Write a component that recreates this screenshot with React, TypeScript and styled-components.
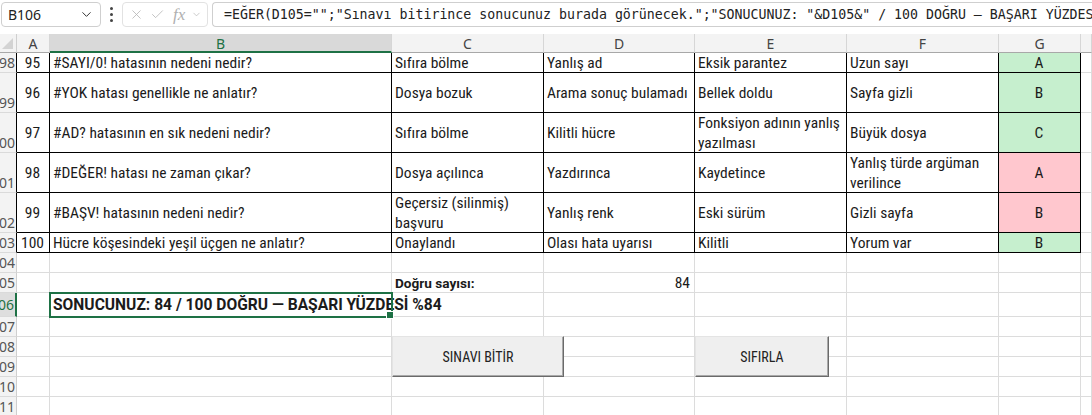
import React from "react";
import styled, { createGlobalStyle, css } from "styled-components";
import { ChevronDown, X, Check } from "lucide-react";

const GREEN = "#1e7145";
const GRID = "#dcdcdc";
const CELL_FONT = `"Liberation Sans Narrow", "Roboto Condensed", Roboto, "Noto Sans", sans-serif`;

const Global = createGlobalStyle`
  html, body { margin: 0; padding: 0; background: #fff; overflow: hidden; }
  body { font-family: ${CELL_FONT}; color: #1b1b1b; }
  * { box-sizing: border-box; }
`;

const Page = styled.div`
  width: 1092px;
  height: 415px;
  overflow: hidden;
  background: #fff;
`;

/* ---------- formula bar ---------- */
const FormulaBar = styled.div`
  height: 34px;
  display: flex;
  align-items: flex-start;
  padding: 2px 0 0 1px;
`;

const NameBox = styled.div`
  width: 100px;
  height: 25px;
  border: 1px solid #cfcfcf;
  border-radius: 4px;
  display: flex;
  align-items: center;
  justify-content: space-between;
  padding: 0 6px 0 6px;
  font-family: "Noto Sans", "Open Sans", sans-serif;
  font-size: 14px;
  color: #222;
`;

const Dots = styled.div`
  width: 21px;
  height: 25px;
  display: flex;
  flex-direction: column;
  align-items: center;
  justify-content: center;
  gap: 3px;
  span {
    width: 3px;
    height: 3px;
    border-radius: 50%;
    background: #444;
  }
`;

const EditBox = styled.div`
  width: 86px;
  height: 25px;
  border: 1px solid #e2e2e2;
  border-radius: 4px;
  display: flex;
  align-items: center;
  padding: 0 4px 0 6px;
  gap: 6px;
  color: #b5b5b5;
`;

const Fx = styled.span`
  font-family: "Liberation Serif", serif;
  font-style: italic;
  font-size: 17px;
  color: #b0b0b0;
  margin-left: 2px;
`;

const FormulaInput = styled.div`
  margin-left: 4px;
  flex: 1;
  height: 25px;
  border: 1px solid #cfcfcf;
  border-right: none;
  border-radius: 4px 0 0 4px;
  display: flex;
  align-items: center;
  padding-left: 11px;
  font-family: "DejaVu Sans Mono", "Liberation Mono", monospace;
  font-size: 13.25px;
  color: #222;
  white-space: nowrap;
  overflow: hidden;
`;

/* ---------- sheet ---------- */
const Sheet = styled.div`
  position: relative;
  display: grid;
  grid-template-columns: 17px 33px 342px 152px 151px 152px 152px 82px 1fr;
  grid-template-rows: 19px 20px 40px 40px 40px 40px 20px 20px 20px 24px 20px 20px 20px 20px 20px;
  font-family: ${CELL_FONT};
  font-size: 15.5px;
`;

const Corner = styled.div`
  background: #f3f3f3;
  border-right: 1px solid #cfcfcf;
  border-bottom: 1px solid #a8a8a8;
  position: relative;
  &::after {
    content: "";
    position: absolute;
    right: 3px;
    bottom: 3px;
    width: 0;
    height: 0;
    border-left: 11px solid transparent;
    border-bottom: 11px solid #d3d3d3;
  }
`;

const ColHeader = styled.div<{ $selected?: boolean }>`
  background: ${(p) => (p.$selected ? "#d9d9d9" : "#f3f3f3")};
  border-right: 1px solid #d6d6d6;
  border-bottom: ${(p) => (p.$selected ? `2px solid ${GREEN}` : "1px solid #a8a8a8")};
  color: ${(p) => (p.$selected ? GREEN : "#444")};
  display: flex;
  align-items: center;
  justify-content: center;
  font-family: "Noto Sans", "Open Sans", sans-serif;
  font-size: 14px;
  padding-top: 1px;
`;

const RowHeader = styled.div<{ $selected?: boolean; $edge?: boolean; $tall?: boolean }>`
  background: ${(p) => (p.$selected ? "#dedede" : "#f3f3f3")};
  border-bottom: 1px solid #dadada;
  border-right: ${(p) =>
    p.$selected ? `2px solid ${GREEN}` : p.$edge ? "1px solid #000" : "1px solid #cfcfcf"};
  color: ${(p) => (p.$selected ? GREEN : "#555")};
  display: flex;
  align-items: ${(p) => (p.$tall ? "flex-end" : "center")};
  justify-content: flex-end;
  overflow: hidden;
  white-space: nowrap;
  font-family: "Noto Sans", "Open Sans", sans-serif;
  font-size: 14px;
  padding-right: 1px;
`;

type Fill = "green" | "red" | undefined;

const Cell = styled.div<{
  $table?: boolean;
  $fill?: Fill;
  $align?: "left" | "center" | "right";
  $bold?: boolean;
  $big?: boolean;
  $wrap?: boolean;
  $selected?: boolean;
}>`
  position: relative;
  display: flex;
  align-items: center;
  justify-content: ${(p) =>
    p.$align === "center" ? "center" : p.$align === "right" ? "flex-end" : "flex-start"};
  text-align: ${(p) => p.$align || "left"};
  padding: 0 4px 0 3px;
  border-right: 1px solid ${(p) => (p.$table ? "#000" : GRID)};
  border-bottom: 1px solid ${(p) => (p.$table ? "#000" : GRID)};
  background: ${(p) => (p.$fill === "green" ? "#c6efce" : p.$fill === "red" ? "#ffc7ce" : "transparent")};
  white-space: ${(p) => (p.$wrap ? "normal" : "nowrap")};
  line-height: ${(p) => (p.$wrap ? "20px" : "normal")};
  overflow: visible;
  ${(p) =>
    p.$bold &&
    css`
      font-family: Roboto, "Noto Sans", sans-serif;
      font-weight: 700;
      font-size: ${p.$big ? "15.6px" : "13.6px"};
    `}
  ${(p) =>
    p.$selected &&
    css`
      z-index: 2;
      outline: 2px solid ${GREEN};
      outline-offset: -1px;
      &::after {
        content: "";
        position: absolute;
        right: -3px;
        bottom: -3px;
        width: 6px;
        height: 6px;
        background: ${GREEN};
        border: 1px solid #fff;
      }
    `}
`;

const SheetButton = styled.button<{ $left: number; $width: number }>`
  position: absolute;
  top: 302px;
  left: ${(p) => p.$left}px;
  width: ${(p) => p.$width}px;
  height: 41px;
  background: #efefef;
  border-top: 1px solid #e4e4e4;
  border-left: 1px solid #e4e4e4;
  border-right: 1px solid #6a6a6a;
  border-bottom: 1px solid #6a6a6a;
  box-shadow: inset -1px -1px 0 #a9a9a9;
  font-family: ${CELL_FONT};
  font-size: 14px;
  color: #222;
  padding: 0;
  cursor: pointer;
`;

type Row = {
  n: number;
  a: string;
  b: string;
  c: string;
  d: string;
  e: string;
  f: string;
  g: string;
  ok: boolean;
};

const rows: Row[] = [
  { n: 98, a: "95", b: "#SAYI/0! hatasının nedeni nedir?", c: "Sıfıra bölme", d: "Yanlış ad", e: "Eksik parantez", f: "Uzun sayı", g: "A", ok: true },
  { n: 99, a: "96", b: "#YOK hatası genellikle ne anlatır?", c: "Dosya bozuk", d: "Arama sonuç bulamadı", e: "Bellek doldu", f: "Sayfa gizli", g: "B", ok: true },
  { n: 100, a: "97", b: "#AD? hatasının en sık nedeni nedir?", c: "Sıfıra bölme", d: "Kilitli hücre", e: "Fonksiyon adının yanlış yazılması", f: "Büyük dosya", g: "C", ok: true },
  { n: 101, a: "98", b: "#DEĞER! hatası ne zaman çıkar?", c: "Dosya açılınca", d: "Yazdırınca", e: "Kaydetince", f: "Yanlış türde argüman verilince", g: "A", ok: false },
  { n: 102, a: "99", b: "#BAŞV! hatasının nedeni nedir?", c: "Geçersiz (silinmiş) başvuru", d: "Yanlış renk", e: "Eski sürüm", f: "Gizli sayfa", g: "B", ok: false },
  { n: 103, a: "100", b: "Hücre köşesindeki yeşil üçgen ne anlatır?", c: "Onaylandı", d: "Olası hata uyarısı", e: "Kilitli", f: "Yorum var", g: "B", ok: true },
];

const cols = ["A", "B", "C", "D", "E", "F", "G", ""];

const formula =
  '=EĞER(D105="";"Sınavı bitirince sonucunuz burada görünecek.";"SONUCUNUZ: "&D105&" / 100 DOĞRU — BAŞARI YÜZDESİ %"&D105)';

export default function App() {
  const tallRows = new Set([99, 100, 101, 102]);
  return (
    <Page>
      <Global />
      <FormulaBar>
        <NameBox>
          <span>B106</span>
          <ChevronDown size={15} color="#333" strokeWidth={1.6} />
        </NameBox>
        <Dots>
          <span />
          <span />
          <span />
        </Dots>
        <EditBox>
          <X size={15} strokeWidth={1.3} />
          <Check size={15} strokeWidth={1.3} />
          <Fx>fx</Fx>
          <ChevronDown size={11} strokeWidth={1.5} />
        </EditBox>
        <FormulaInput>{formula}</FormulaInput>
      </FormulaBar>

      <Sheet>
        <Corner />
        {cols.map((c, i) => (
          <ColHeader key={"h" + i} $selected={c === "B"}>
            {c}
          </ColHeader>
        ))}

        {rows.map((r) => (
          <React.Fragment key={r.n}>
            <RowHeader $edge $tall={tallRows.has(r.n)}>
              {r.n}
            </RowHeader>
            <Cell $table $align="center">{r.a}</Cell>
            <Cell $table>{r.b}</Cell>
            <Cell $table $wrap>{r.c}</Cell>
            <Cell $table $wrap>{r.d}</Cell>
            <Cell $table $wrap>{r.e}</Cell>
            <Cell $table $wrap>{r.f}</Cell>
            <Cell $table $align="center" $fill={r.ok ? "green" : "red"}>
              {r.g}
            </Cell>
            <Cell />
          </React.Fragment>
        ))}

        <RowHeader>104</RowHeader>
        {cols.map((_, i) => (
          <Cell key={"r104" + i} />
        ))}

        <RowHeader>105</RowHeader>
        <Cell />
        <Cell />
        <Cell $bold>Doğru sayısı:</Cell>
        <Cell $align="right">84</Cell>
        <Cell />
        <Cell />
        <Cell />
        <Cell />

        <RowHeader $selected>106</RowHeader>
        <Cell />
        <Cell $bold $big $selected>
          SONUCUNUZ: 84 / 100 DOĞRU — BAŞARI YÜZDESİ %84
        </Cell>
        <Cell />
        <Cell />
        <Cell />
        <Cell />
        <Cell />
        <Cell />

        {[107, 108, 109, 110, 111].map((n) => (
          <React.Fragment key={n}>
            <RowHeader>{n}</RowHeader>
            {cols.map((_, i) => (
              <Cell key={i} />
            ))}
          </React.Fragment>
        ))}

        <SheetButton $left={392} $width={172}>SINAVI BİTİR</SheetButton>
        <SheetButton $left={695} $width={134}>SIFIRLA</SheetButton>
      </Sheet>
    </Page>
  );
}
